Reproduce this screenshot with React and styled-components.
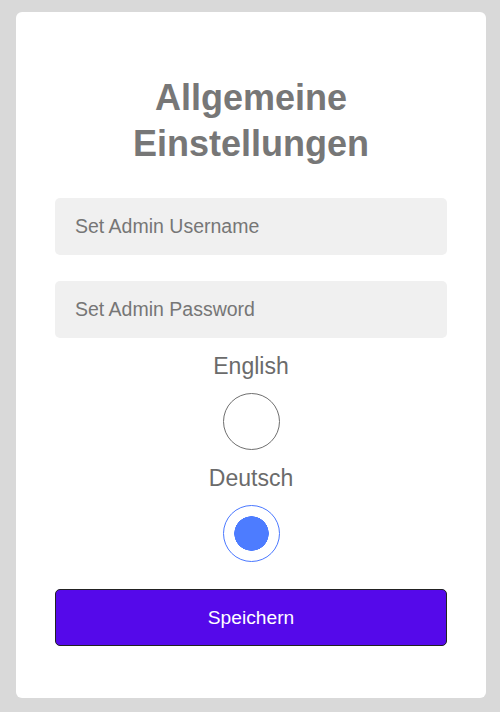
import React, { useState } from 'react';
import styled, { createGlobalStyle } from 'styled-components';

const GlobalStyle = createGlobalStyle`
  html, body {
    margin: 0;
    padding: 0;
    background: #d9d9d9;
    font-family: "Liberation Sans", Arial, sans-serif;
  }
`;

const Page = styled.div`
  padding: 12px 14px 15px 16px;
  min-height: 712px;
  box-sizing: border-box;
`;

const Card = styled.form`
  background: #fff;
  border-radius: 6px;
  padding: 63px 39px 52px;
  display: flex;
  flex-direction: column;
  align-items: stretch;
`;

const Title = styled.h1`
  margin: 0 0 31px;
  font-size: 36px;
  line-height: 46px;
  font-weight: bold;
  color: #777;
  text-align: center;
`;

const Field = styled.input`
  height: 57px;
  border: none;
  border-radius: 5px;
  background: #f0f0f0;
  padding: 0 20px;
  font-family: inherit;
  font-size: 19.5px;
  color: #444;
  margin-bottom: ${(p) => p.$gap || 0}px;
  outline: none;

  &::placeholder {
    color: #767676;
  }
`;

const Option = styled.label`
  display: flex;
  flex-direction: column;
  align-items: center;
  gap: 13px;
  margin-top: ${(p) => p.$top}px;
  font-size: 23px;
  color: #6b6b6b;
  cursor: pointer;
`;

const Radio = styled.input`
  appearance: none;
  margin: 0;
  width: 57px;
  height: 57px;
  border-radius: 50%;
  border: 1px solid ${(p) => (p.checked ? '#4a78ff' : '#6f6f6f')};
  background: ${(p) => (p.checked ? 'radial-gradient(circle, #4d7cff 0 17px, #fff 17.5px)' : '#fff')};
  cursor: pointer;
`;

const SaveButton = styled.button`
  margin-top: 27px;
  height: 57px;
  background: #5509ea;
  color: #fff;
  border: 1px solid #222;
  border-radius: 5px;
  font-family: inherit;
  font-size: 19.2px;
  cursor: pointer;
`;

export default function App() {
  const [lang, setLang] = useState('de');

  return (
    <Page>
      <GlobalStyle />
      <Card onSubmit={(e) => e.preventDefault()}>
        <Title>
          Allgemeine
          <br />
          Einstellungen
        </Title>
        <Field placeholder="Set Admin Username" $gap={26} />
        <Field type="password" placeholder="Set Admin Password" />
        <Option $top={15}>
          English
          <Radio type="radio" name="lang" checked={lang === 'en'} onChange={() => setLang('en')} />
        </Option>
        <Option $top={15}>
          Deutsch
          <Radio type="radio" name="lang" checked={lang === 'de'} onChange={() => setLang('de')} />
        </Option>
        <SaveButton type="submit">Speichern</SaveButton>
      </Card>
    </Page>
  );
}
